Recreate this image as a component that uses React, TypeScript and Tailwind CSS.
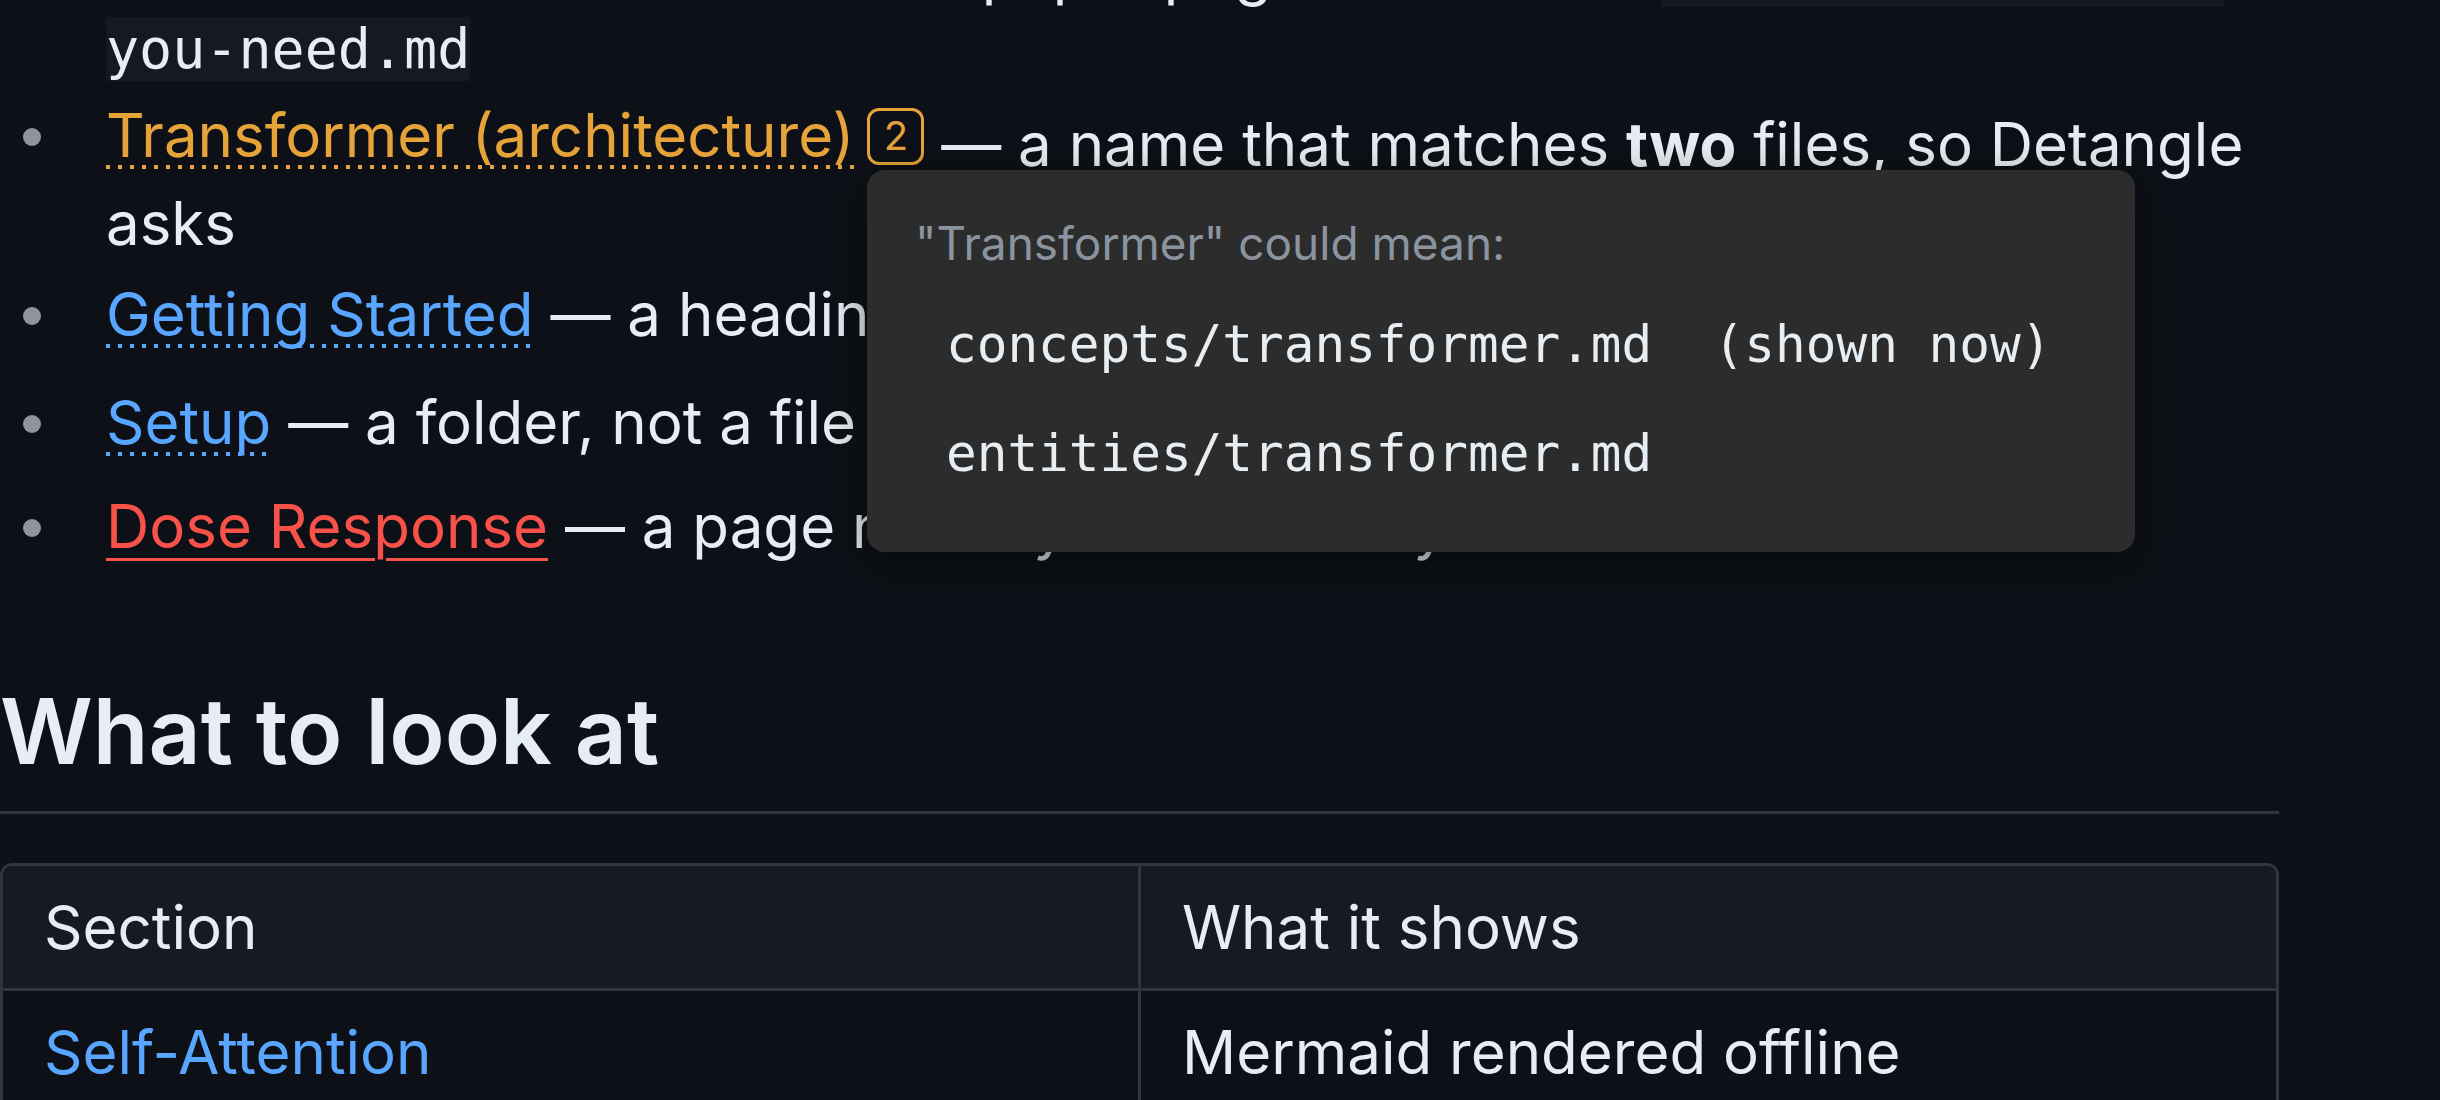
import React from 'react'

const dotted =
  'bg-[linear-gradient(to_right,currentColor_4px,transparent_4px)] bg-[length:12px_4px] bg-repeat-x bg-[position:0_calc(100%_-_2px)]'

function Bullet({ top = 'mt-[37px]' }: { top?: string }) {
  return (
    <span className="flex w-[106px] shrink-0">
      <span className={`ml-[23px] ${top} size-[18px] rounded-full bg-[#8d96a0]`} />
    </span>
  )
}

function Code({ children, className = '' }: { children: React.ReactNode; className?: string }) {
  return (
    <code className={`bg-[#151a22] font-['DejaVu_Sans_Mono',monospace] text-[55px] leading-none ${className}`}>
      {children}
    </code>
  )
}

export default function App() {
  return (
    <div className="relative h-[1100px] w-[2440px] overflow-hidden bg-[#0d1117] font-['Inter',sans-serif] text-[60px] text-[#e6edf3]">
      <div className="w-[2279px]">
        <ul className="-mt-[139px]">
          {/* item that starts above the fold */}
          <li className="flex leading-[74px]">
            <Bullet top="mt-[30px]" />
            <div className="whitespace-nowrap">
              <a className={`text-[#58a6ff] ${dotted}`}>Attention</a> — an alias that points at the same note and opens the
              <br />
              file that holds the whole of the paper page lives in the{' '}
              <Code className="ml-[19px]">attention-is-all-</Code>
              <br />
              <Code>you-need.md</Code>
            </div>
          </li>

          <li className="mt-[13px] flex leading-[79px]">
            <Bullet top="mt-[32px]" />
            <div>
              <span className="whitespace-nowrap">
                <span className="inline-block align-[9px]">
                  <a className={`text-[#e5a33a] ${dotted}`}>Transformer (architecture)</a>
                  <span className="ml-[13px] inline-block h-[57px] w-[57px] rounded-[12px] border-[3px] border-[#e5a33a] text-center align-[7px] text-[40px] leading-[50px] text-[#e5a33a]">
                    2
                  </span>
                </span>{' '}
                — a name that matches <b className="font-bold">two</b> files, so Detangle
              </span>
              <br />
              asks
            </div>
          </li>

          <li className="mt-[7px] flex leading-[88px]">
            <Bullet />
            <div className="whitespace-nowrap">
              <a className={`text-[#58a6ff] ${dotted}`}>Getting Started</a> — a heading inside another page
            </div>
          </li>

          <li className="mt-[20px] flex leading-[88px]">
            <Bullet />
            <div className="whitespace-nowrap">
              <a className={`text-[#58a6ff] ${dotted}`}>Setup</a> — a folder, not a file
            </div>
          </li>

          <li className="mt-[16px] flex leading-[88px]">
            <Bullet />
            <div className="whitespace-nowrap">
              <a className="text-[#f85149] underline decoration-[3px] underline-offset-[10px]">Dose Response</a> — a page
              nobody has written yet
            </div>
          </li>
        </ul>

        <h2 className="mt-[105px] border-b-[3px] border-[#30363d] pb-[24px] text-[91px] font-semibold leading-[112px]">
          What to look at
        </h2>

        <div className="mt-[49px] overflow-hidden rounded-[12px] border-[3px] border-[#30363d] leading-[88px]">
          <div className="grid grid-cols-[1135px_1fr] bg-[#161b22]">
            <div className="px-[41px] py-[17px]">Section</div>
            <div className="border-l-[3px] border-[#30363d] px-[41px] py-[17px]">What it shows</div>
          </div>
          <div className="grid grid-cols-[1135px_1fr] border-t-[3px] border-[#30363d]">
            <div className="px-[41px] py-[17px] text-[#58a6ff]">Self-Attention</div>
            <div className="border-l-[3px] border-[#30363d] px-[41px] py-[17px]">Mermaid rendered offline</div>
          </div>
          <div className="grid grid-cols-[1135px_1fr] border-t-[3px] border-[#30363d]">
            <div className="px-[41px] py-[17px] text-[#58a6ff]">Encoder Stack</div>
            <div className="border-l-[3px] border-[#30363d] px-[41px] py-[17px]">Nested headings</div>
          </div>
        </div>
      </div>

      {/* disambiguation popover */}
      <div className="absolute left-[867px] top-[170px] h-[382px] w-[1268px] rounded-[18px] bg-[#2c2c2c] px-[48px] pt-[38px] shadow-[0_12px_40px_rgba(0,0,0,0.5)]">
        <div className="text-[46px] leading-[70px] text-[#8b949e]">"Transformer" could mean:</div>
        <div className="mt-[12px] font-['DejaVu_Sans_Mono',monospace] text-[51px] text-[#e6edf3]">
          <div className="whitespace-pre py-[25px] pl-[31px] leading-[59px]">concepts/transformer.md  (shown now)</div>
          <div className="whitespace-pre py-[25px] pl-[31px] leading-[59px]">entities/transformer.md</div>
        </div>
      </div>
    </div>
  )
}
